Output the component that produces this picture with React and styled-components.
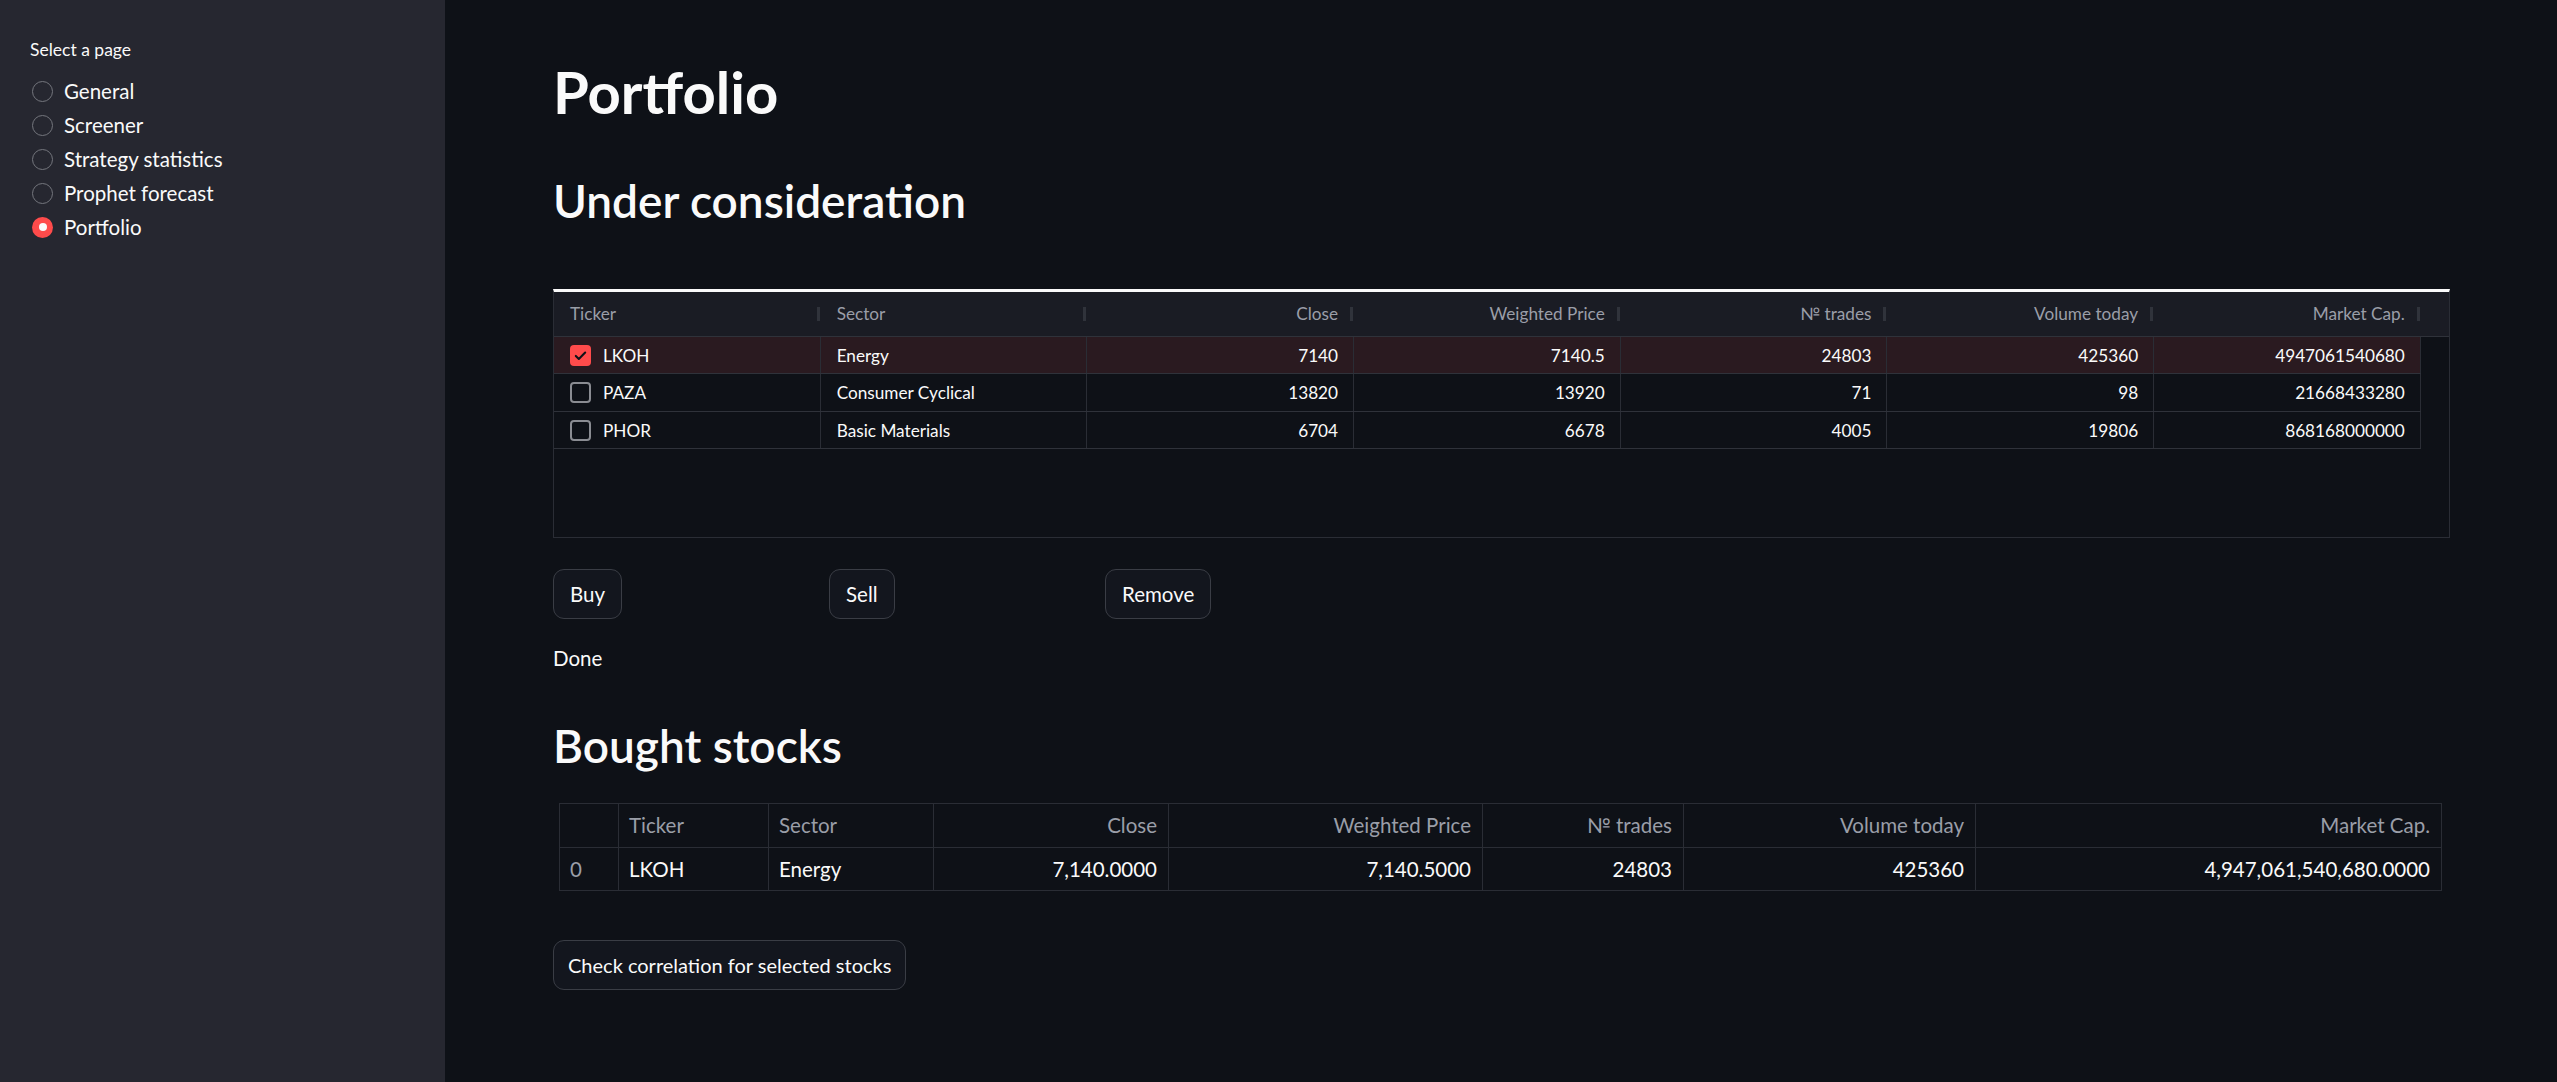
import React from 'react';
import styled, { createGlobalStyle } from 'styled-components';

const GlobalStyle = createGlobalStyle`
  html, body {
    margin: 0;
    padding: 0;
    background: #0e1117;
    font-family: 'Lato', 'Noto Sans', sans-serif;
    color: #fafafa;
  }
  * { box-sizing: border-box; }
`;

const pages = ['General', 'Screener', 'Strategy statistics', 'Prophet forecast', 'Portfolio'];

const columns = [
  { title: 'Ticker', align: 'left' },
  { title: 'Sector', align: 'left' },
  { title: 'Close', align: 'right' },
  { title: 'Weighted Price', align: 'right' },
  { title: '№ trades', align: 'right' },
  { title: 'Volume today', align: 'right' },
  { title: 'Market Cap.', align: 'right' },
];

const candidates = [
  { selected: true, cells: ['LKOH', 'Energy', '7140', '7140.5', '24803', '425360', '4947061540680'] },
  { selected: false, cells: ['PAZA', 'Consumer Cyclical', '13820', '13920', '71', '98', '21668433280'] },
  { selected: false, cells: ['PHOR', 'Basic Materials', '6704', '6678', '4005', '19806', '868168000000'] },
];

const boughtCols = [
  { title: '', align: 'left', width: 59 },
  { title: 'Ticker', align: 'left', width: 150 },
  { title: 'Sector', align: 'left', width: 165 },
  { title: 'Close', align: 'right', width: 235 },
  { title: 'Weighted Price', align: 'right', width: 314 },
  { title: '№ trades', align: 'right', width: 201 },
  { title: 'Volume today', align: 'right', width: 292 },
  { title: 'Market Cap.', align: 'right', width: 466 },
];

const bought = [['0', 'LKOH', 'Energy', '7,140.0000', '7,140.5000', '24803', '425360', '4,947,061,540,680.0000']];

const App = () => {
  return (
    <>
      <GlobalStyle />
      <Page>
        {/* ---------------- sidebar ---------------- */}
        <Sidebar>
          <SideLabel>Select a page</SideLabel>
          <RadioList>
            {pages.map(p => (
              <RadioRow key={p}>
                <RadioDot $active={p === 'Portfolio'} />
                <span>{p}</span>
              </RadioRow>
            ))}
          </RadioList>
        </Sidebar>

        {/* ---------------- main ---------------- */}
        <Main>
          <Title>Portfolio</Title>
          <SubTitle $top={46}>Under consideration</SubTitle>

          <Grid>
            <GridHead>
              {columns.map(c => (
                <HeadCell key={c.title} $align={c.align}>
                  {c.title}
                </HeadCell>
              ))}
              <div />
            </GridHead>
            {candidates.map(row => (
              <GridRow key={row.cells[0]} $selected={row.selected}>
                {row.cells.map((v, i) => (
                  <Cell key={i} $align={columns[i].align}>
                    {i === 0 && (
                      <Check $on={row.selected}>
                        {row.selected && (
                          <svg width="15" height="15" viewBox="0 0 16 16">
                            <path d="M3 8.5l3.2 3.2L13 4.8" fill="none" stroke="#0e1117" strokeWidth="2.2" strokeLinecap="round" strokeLinejoin="round" />
                          </svg>
                        )}
                      </Check>
                    )}
                    {v}
                  </Cell>
                ))}
              </GridRow>
            ))}
          </Grid>

          <ButtonRow>
            <div><Button>Buy</Button></div>
            <div><Button>Sell</Button></div>
            <div><Button>Remove</Button></div>
          </ButtonRow>

          <Text>Done</Text>

          <SubTitle $top={42}>Bought stocks</SubTitle>

          <Table>
            <colgroup>
              {boughtCols.map((c, i) => (
                <col key={i} style={{ width: c.width }} />
              ))}
            </colgroup>
            <thead>
              <tr>
                {boughtCols.map((c, i) => (
                  <Th key={i} $align={c.align}>{c.title}</Th>
                ))}
              </tr>
            </thead>
            <tbody>
              {bought.map((r, ri) => (
                <tr key={ri}>
                  {r.map((v, i) => (
                    <Td key={i} $align={boughtCols[i].align} $index={i === 0}>{v}</Td>
                  ))}
                </tr>
              ))}
            </tbody>
          </Table>

          <WideButton>Check correlation for selected stocks</WideButton>
        </Main>
      </Page>
    </>
  );
};

export default App;

const Page = styled.div`
  display: flex;
  min-height: 1082px;
`;

const Sidebar = styled.aside`
  width: 445px;
  flex-shrink: 0;
  background: #262730;
  padding: 38px 30px 0 30px;
`;

const SideLabel = styled.div`
  font-size: 17.5px;
  line-height: 24px;
  color: #fafafa;
`;

const RadioList = styled.div`
  display: flex;
  flex-direction: column;
  margin-top: 12px;
`;

const RadioRow = styled.div`
  display: flex;
  align-items: center;
  gap: 11px;
  height: 34px;
  padding-left: 2px;
  font-size: 20.5px;
  color: #fafafa;
`;

const RadioDot = styled.span`
  width: 21px;
  height: 21px;
  border-radius: 50%;
  flex-shrink: 0;
  display: flex;
  align-items: center;
  justify-content: center;
  border: ${p => (p.$active ? 'none' : '1.5px solid #74767d')};
  background: ${p => (p.$active ? '#ff4b4b' : 'transparent')};
  &::after {
    content: '';
    width: 8px;
    height: 8px;
    border-radius: 50%;
    background: #fafafa;
    display: ${p => (p.$active ? 'block' : 'none')};
  }
`;

const Main = styled.main`
  flex: 1;
  background: #0e1117;
  padding: 57px 107px 40px 108px;
`;

const Title = styled.h1`
  margin: 0;
  font-size: 58px;
  line-height: 1.2;
  font-weight: 700;
  color: #fafafa;
`;

const SubTitle = styled.h2`
  margin: ${p => p.$top}px 0 0 0;
  font-size: 46px;
  line-height: 1.2;
  font-weight: 600;
  color: #fafafa;
`;

const Grid = styled.div`
  margin-top: 61px;
  height: 249px;
  border: 1px solid #2a2d35;
  border-top: 3px solid #fafafa;
  background: #0e1117;
`;

const GridHead = styled.div`
  display: grid;
  grid-template-columns: repeat(7, 266.7px) 1fr;
  height: 45px;
  background: #1a1c24;
  border-bottom: 1px solid #2f323a;
`;

const HeadCell = styled.div`
  position: relative;
  display: flex;
  align-items: center;
  justify-content: ${p => (p.$align === 'right' ? 'flex-end' : 'flex-start')};
  padding: 0 16px;
  font-size: 17.2px;
  color: #9a9ea8;
  &::after {
    content: '';
    position: absolute;
    right: 1px;
    top: 50%;
    transform: translateY(-50%);
    width: 3px;
    height: 14px;
    background: #30333b;
  }
`;

const GridRow = styled.div`
  display: grid;
  grid-template-columns: repeat(7, 266.7px);
  width: ${266.7 * 7}px;
  height: 37.5px;
  background: ${p => (p.$selected ? '#2a1a20' : '#0e1117')};
  border-bottom: 1px solid #2f323a;
`;

const Cell = styled.div`
  display: flex;
  align-items: center;
  justify-content: ${p => (p.$align === 'right' ? 'flex-end' : 'flex-start')};
  gap: 12px;
  padding: 0 15px 0 16px;
  font-size: 17.2px;
  color: #fafafa;
  border-right: 1px solid #2a2d35;
`;

const Check = styled.span`
  width: 21px;
  height: 21px;
  border-radius: 4px;
  display: flex;
  align-items: center;
  justify-content: center;
  background: ${p => (p.$on ? '#ff4b4b' : 'transparent')};
  border: ${p => (p.$on ? 'none' : '2px solid #8a8c92')};
`;

const ButtonRow = styled.div`
  display: grid;
  grid-template-columns: repeat(7, 1fr);
  gap: 35px;
  margin-top: 31px;
`;

const Button = styled.button`
  height: 50px;
  padding: 0 16px;
  border: 1px solid #3a3d45;
  border-radius: 11px;
  background: #13161e;
  color: #fafafa;
  font-family: 'Lato', 'Noto Sans', sans-serif;
  font-size: 20.5px;
  cursor: pointer;
`;

const WideButton = styled(Button)`
  display: block;
  margin-top: 49px;
  padding: 0 14px;
  font-size: 20px;
`;

const Text = styled.p`
  margin: 22px 0 0 0;
  font-size: 20.5px;
  line-height: 35px;
  color: #fafafa;
`;

const Table = styled.table`
  margin: 30px 0 0 6px;
  border-collapse: collapse;
  table-layout: fixed;
  width: 1882px;
  border: 1px solid #2a2d35;
`;

const Th = styled.th`
  height: 44px;
  padding: 0 11px 0 10px;
  text-align: ${p => p.$align};
  font-weight: 400;
  font-size: 20.5px;
  color: #9a9ea8;
  border: 1px solid #2a2d35;
`;

const Td = styled.td`
  height: 43px;
  padding: 0 11px 0 10px;
  text-align: ${p => p.$align};
  font-size: 20.5px;
  color: ${p => (p.$index ? '#9a9ea8' : '#fafafa')};
  border: 1px solid #2a2d35;
`;
